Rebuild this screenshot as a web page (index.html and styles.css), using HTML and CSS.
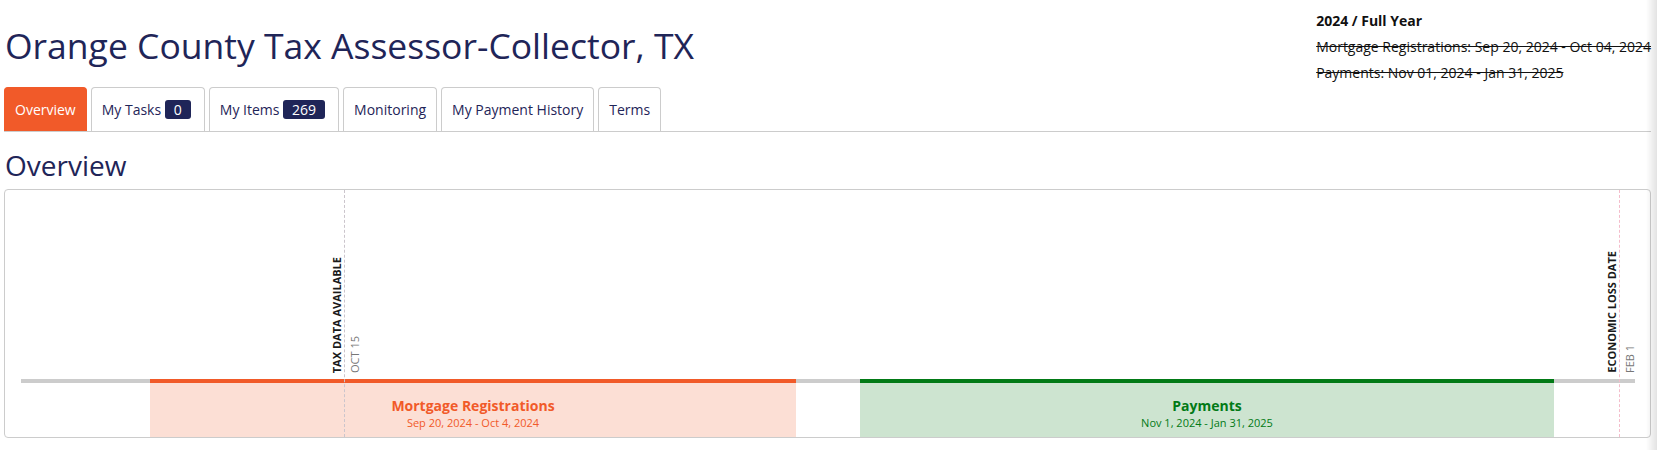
FILE: index.html
```html
<!DOCTYPE html>
<html lang="en">
<head>
<meta charset="utf-8">
<title>Orange County Tax Assessor-Collector, TX</title>
<link rel="stylesheet" href="styles.css">
</head>
<body>
<div class="page">
  <header class="header">
    <h1 class="title">Orange County Tax Assessor-Collector, TX</h1>
    <div class="period">
      <div class="period-name">2024 / Full Year</div>
      <div class="period-line">Mortgage Registrations: Sep 20, 2024 - Oct 04, 2024</div>
      <div class="period-line">Payments: Nov 01, 2024 - Jan 31, 2025</div>
    </div>
  </header>

  <nav class="tabs">
    <a class="tab tab-active">Overview</a>
    <a class="tab">My Tasks <span class="badge">0</span></a>
    <a class="tab">My Items <span class="badge">269</span></a>
    <a class="tab">Monitoring</a>
    <a class="tab">My Payment History</a>
    <a class="tab">Terms</a>
  </nav>

  <h2 class="section-title">Overview</h2>

  <div class="timeline-card">
    <div class="timeline">
      <div class="track" style="left:16px;width:1614px"></div>

      <div class="segment segment-orange" style="left:145px;width:646px">
        <div class="segment-name">Mortgage Registrations</div>
        <div class="segment-dates">Sep 20, 2024 - Oct 4, 2024</div>
      </div>
      <div class="segment segment-green" style="left:855px;width:694px">
        <div class="segment-name">Payments</div>
        <div class="segment-dates">Nov 1, 2024 - Jan 31, 2025</div>
      </div>

      <div class="marker" style="left:339px">
        <span class="marker-name">TAX DATA AVAILABLE</span>
        <span class="marker-date">OCT 15</span>
      </div>
      <div class="marker marker-pink" style="left:1614px">
        <span class="marker-name">ECONOMIC LOSS DATE</span>
        <span class="marker-date">FEB 1</span>
      </div>
    </div>
  </div>
</div>
<div class="edge-shade"></div>
</body>
</html>
```

FILE: styles.css
```css
* { box-sizing: border-box; }

html, body {
  margin: 0;
  padding: 0;
  background: #ffffff;
}

body {
  font-family: "Open Sans", "Noto Sans", "Liberation Sans", sans-serif;
  color: #111111;
  font-size: 14px;
}

.page {
  padding: 0 6px 0 4px;
}

.header {
  display: flex;
  justify-content: space-between;
  align-items: flex-start;
}

.title {
  margin: 24px 0 0 1px;
  font-size: 35.5px;
  line-height: 43px;
  font-weight: 400;
  color: #1f2558;
}

.period {
  margin-top: 8px;
  font-size: 14px;
  line-height: 26px;
  color: #111111;
}

.period-name {
  font-weight: 700;
}

.period-line {
  text-decoration: line-through;
}

.tabs {
  display: flex;
  gap: 4px;
  margin-top: 1px;
  border-bottom: 1px solid #cccccc;
}

.tab {
  display: flex;
  align-items: center;
  height: 44px;
  padding: 0 10px;
  border: 1px solid #cccccc;
  border-bottom: none;
  border-radius: 4px 4px 0 0;
  color: #1f2558;
  font-size: 14px;
  white-space: pre;
}

.tab-active {
  background: #f15a29;
  border-color: #f15a29;
  color: #ffffff;
}

.badge {
  display: inline-flex;
  align-items: center;
  height: 19px;
  margin: 0 3px 0 0;
  padding: 0 9px;
  border-radius: 3px;
  background: #1f2558;
  color: #ffffff;
  font-size: 14px;
}

.section-title {
  margin: 16px 0 7px 1px;
  font-size: 28px;
  line-height: 34px;
  font-weight: 400;
  color: #1f2558;
}

.timeline-card {
  height: 249px;
  border: 1px solid #cccccc;
  border-radius: 4px;
  overflow: hidden;
}

.timeline {
  position: relative;
  height: 100%;
}

.track {
  position: absolute;
  top: 189px;
  height: 4px;
  background: #cccccc;
}

.segment {
  position: absolute;
  top: 189px;
  bottom: 0;
  border-top: 4px solid;
  text-align: center;
  padding-top: 13px;
}

.segment-orange {
  border-top-color: #f15a29;
  background: #fcdfd5;
  color: #f15a29;
}

.segment-green {
  border-top-color: #027a16;
  background: #cde4d0;
  color: #027a16;
}

.segment-name {
  font-size: 14px;
  line-height: 19px;
  font-weight: 700;
}

.segment-dates {
  font-size: 11px;
  line-height: 16px;
}

.marker {
  position: absolute;
  top: 0;
  bottom: 0;
  width: 0;
  border-left: 1px dashed #cbc5cc;
}

.marker-pink {
  border-left-color: #f4bccb;
}

.marker-name,
.marker-date {
  position: absolute;
  bottom: 64px;
  writing-mode: vertical-rl;
  transform: rotate(180deg);
  font-size: 11px;
  line-height: 14px;
  white-space: nowrap;
}

.marker-name {
  right: 1px;
  font-weight: 700;
  color: #1a1a1a;
}

.marker-date {
  left: 3px;
  color: #777777;
}

.edge-shade {
  position: fixed;
  top: 0;
  right: 0;
  bottom: 0;
  width: 11px;
  background: linear-gradient(to right, rgba(0, 0, 0, 0), rgba(0, 0, 0, 0.11));
  pointer-events: none;
}
```
